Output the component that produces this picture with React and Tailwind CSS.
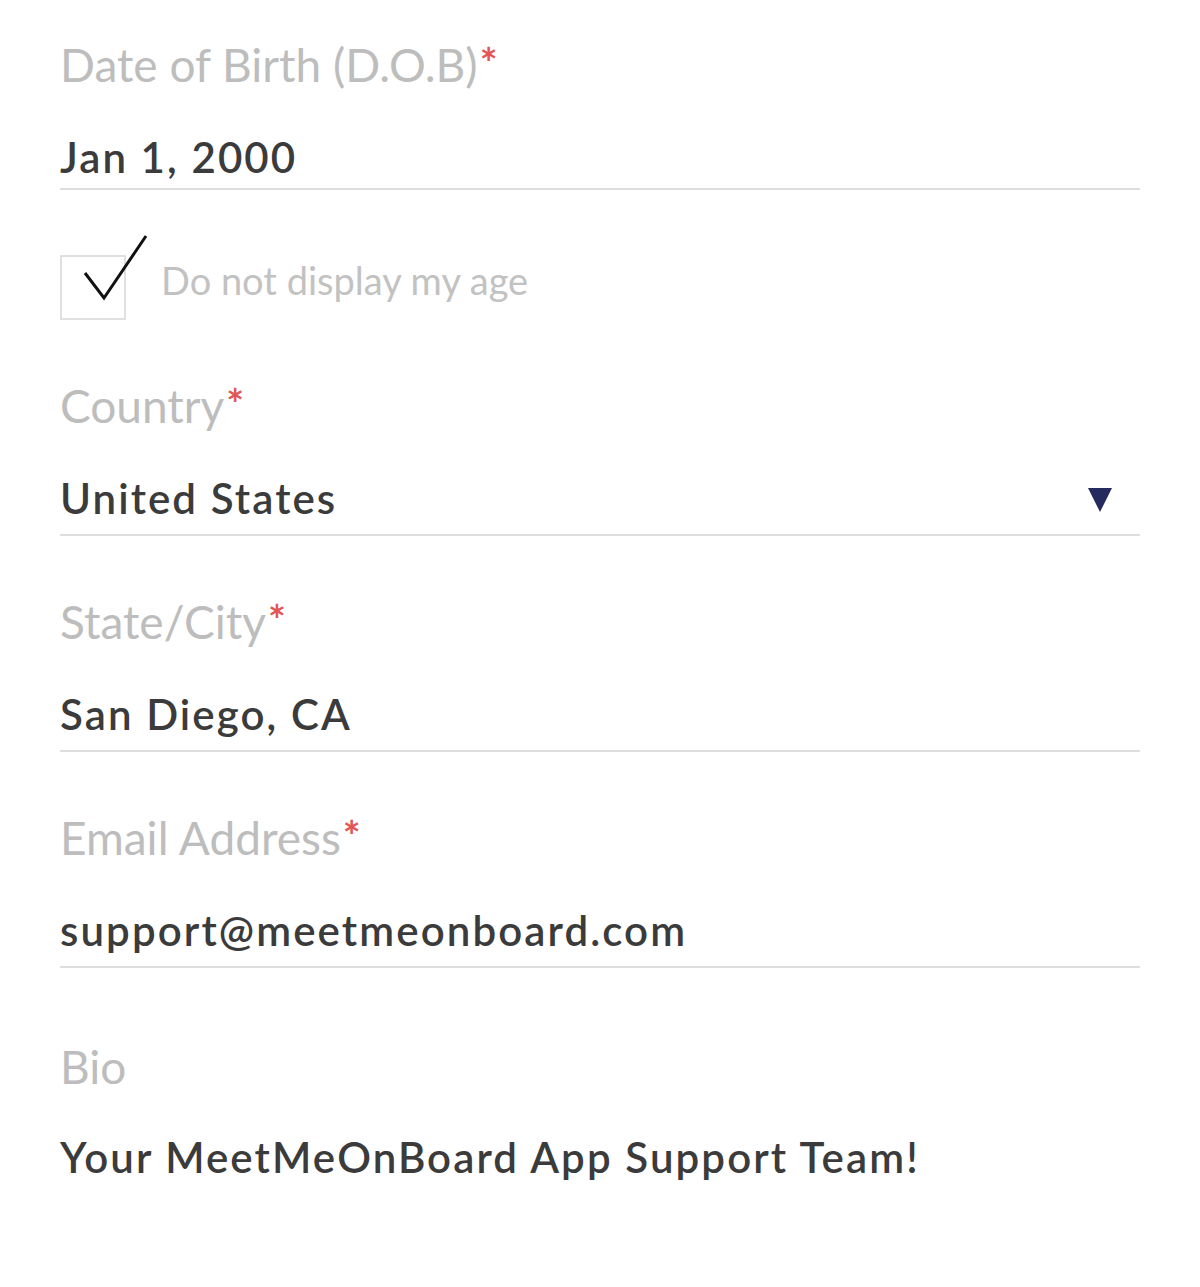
import { useState } from 'react';

const FONT = { fontFamily: 'Lato, "Open Sans", sans-serif' };

function Label({ text, required }) {
  return (
    <div className="h-[56px] text-[46px] leading-[56px] text-[#bdbdbd] whitespace-nowrap">
      {text}
      {required && <span className="text-[#e25656] text-[42px] font-bold align-top relative top-[-2px] ml-[2px]">*</span>}
    </div>
  );
}

function Field({ label, required, value, select, first }) {
  return (
    <div className={first ? '' : 'mt-[58px]'}>
      <Label text={label} required={required} />
      <div className={`mt-[40px] flex items-center justify-between border-b-2 border-[#dedede] ${first ? 'pb-[7px]' : 'pb-[12px]'}`}>
        <div className="h-[48px] text-[42px] leading-[48px] font-semibold tracking-[2.1px] text-[#3b3b3b] whitespace-nowrap">{value}</div>
        {select && (
          <svg width="24" height="24" viewBox="0 0 24 24" className="mr-[28px] mt-[4px]">
            <polygon points="0,0 24,0 12,24" fill="#252b5e" />
          </svg>
        )}
      </div>
    </div>
  );
}

export default function App() {
  const [hideAge, setHideAge] = useState(true);

  return (
    <div className="w-[1200px] h-[1287px] bg-white px-[60px] pt-[37px] overflow-hidden" style={FONT}>
      <Field label="Date of Birth (D.O.B)" required value="Jan 1, 2000" first />

      <div className="mt-[65px] flex items-center gap-[35px] cursor-pointer" onClick={() => setHideAge(v => !v)}>
        <div className="relative w-[66px] h-[65px] border-2 border-[#e0e0e0] shrink-0">
          {hideAge && (
            <svg width="70" height="72" viewBox="0 0 70 72" className="absolute left-[20px] top-[-22px]">
              <polyline points="3,38 22,63 64,1" fill="none" stroke="#111" strokeWidth="3" />
            </svg>
          )}
        </div>
        <div className="text-[38px] text-[#c2c2c2] leading-[44px] mt-[-16px]">Do not display my age</div>
      </div>

      <div>
        <Field label="Country" required value="United States" select />
        <Field label="State/City" required value="San Diego, CA" />
        <Field label="Email Address" required value="support@meetmeonboard.com" />
      </div>

      <div className="mt-[71px]">
        <Label text="Bio" />
        <div className="mt-[38px] h-[48px] text-[42px] leading-[48px] font-semibold tracking-[2.1px] text-[#3b3b3b] whitespace-nowrap">
          Your MeetMeOnBoard App Support Team!
        </div>
      </div>
    </div>
  );
}
